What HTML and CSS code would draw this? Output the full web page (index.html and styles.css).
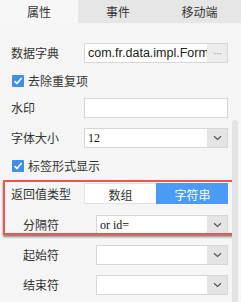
FILE: index.html
```html
<!DOCTYPE html>
<html lang="zh">
  <head>
    <meta charset="UTF-8" />
    <meta name="viewport" content="width=device-width, initial-scale=1.0" />
    <title>属性</title>
    <link rel="stylesheet" href="styles.css">
  </head>
  <body>
    <div class="tabs">
      <div class="tab active">属性</div>
      <div class="tab">事件</div>
      <div class="tab">移动端</div>
    </div>

    <div class="panel">
      <div class="row">
        <span class="label">数据字典</span>
        <div class="field">
          <span class="value wide">com.fr.data.impl.Form</span>
          <span class="btn more">···</span>
        </div>
      </div>

      <div class="check">
        <span class="box">
          <svg width="12" height="12" viewBox="0 0 12 12"><path d="M2.5 6.2 L5 8.6 L9.6 3" fill="none" stroke="#fff" stroke-width="1.6"/></svg>
        </span>
        去除重复项
      </div>

      <div class="row">
        <span class="label">水印</span>
        <div class="field"></div>
      </div>

      <div class="row">
        <span class="label">字体大小</span>
        <div class="field">
          <span class="value serif">12</span>
          <span class="btn"><svg width="9" height="6" viewBox="0 0 9 6"><path d="M1 1.2 L4.5 4.5 L8 1.2" fill="none" stroke="#555" stroke-width="1.2"/></svg></span>
        </div>
      </div>

      <div class="check">
        <span class="box">
          <svg width="12" height="12" viewBox="0 0 12 12"><path d="M2.5 6.2 L5 8.6 L9.6 3" fill="none" stroke="#fff" stroke-width="1.6"/></svg>
        </span>
        标签形式显示
      </div>

      <!-- highlighted group, the red frame is an annotation over it -->
      <div class="group">
        <div class="row tall">
          <span class="label">返回值类型</span>
          <div class="toggle">
            <span class="seg">数组</span>
            <span class="seg on">字符串</span>
          </div>
        </div>
        <div class="row sub tall">
          <span class="label">分隔符</span>
          <div class="field">
            <span class="value serif">or id=</span>
            <span class="btn"><svg width="9" height="6" viewBox="0 0 9 6"><path d="M1 1.2 L4.5 4.5 L8 1.2" fill="none" stroke="#555" stroke-width="1.2"/></svg></span>
          </div>
        </div>
        <div class="frame"></div>
      </div>

      <div class="row sub">
        <span class="label">起始符</span>
        <div class="field">
          <span class="value"></span>
          <span class="btn"><svg width="9" height="6" viewBox="0 0 9 6"><path d="M1 1.2 L4.5 4.5 L8 1.2" fill="none" stroke="#555" stroke-width="1.2"/></svg></span>
        </div>
      </div>

      <div class="row sub">
        <span class="label">结束符</span>
        <div class="field">
          <span class="value"></span>
          <span class="btn"><svg width="9" height="6" viewBox="0 0 9 6"><path d="M1 1.2 L4.5 4.5 L8 1.2" fill="none" stroke="#555" stroke-width="1.2"/></svg></span>
        </div>
      </div>

      <div class="scroll"></div>
    </div>
  </body>
</html>
```

FILE: styles.css
```css
/* Property panel */
body {
  margin: 0;
  width: 241px;
  height: 302px;
  overflow: hidden;
  background-color: #f5f5f5;
  font-family: "Noto Sans CJK SC", "Liberation Sans", sans-serif;
  font-size: 12px;
  color: #333;
}

.tabs {
  display: grid;
  grid-template-columns: 78px 80px 1fr;
  height: 23px;
  background-color: #e6e6e6;
}

.tab {
  text-align: center;
  line-height: 23px;
}

.tab.active {
  background-color: #f7f7f7;
}

.panel {
  position: relative;
  height: 279px;
  padding-top: 15px;
  box-sizing: border-box;
}

.row {
  display: flex;
  align-items: center;
  height: 30px;
  padding: 0 13px 0 11px;
}

.row.tall {
  height: 31px;
}

.row.sub {
  padding-left: 23px;
}

.label {
  width: 73px;
  flex: none;
  line-height: 16px;
}

.field {
  flex: 1;
  display: flex;
  height: 20px;
  box-sizing: border-box;
  border: 1px solid #d6d6d6;
  background-color: #fff;
  overflow: hidden;
}

.value {
  flex: 1;
  min-width: 0;
  padding-left: 3px;
  line-height: 18px;
  white-space: nowrap;
  overflow: hidden;
  font-family: "Liberation Sans", sans-serif;
  color: #222;
}

.value.wide {
  font-size: 12.5px;
}

.value.serif {
  font-family: "Liberation Serif", serif;
  color: #111;
}

.btn {
  width: 20px;
  flex: none;
  display: flex;
  align-items: center;
  justify-content: center;
  background-color: #e4e4e4;
}

.btn.more {
  color: #999;
  font-family: "Liberation Sans", sans-serif;
  font-size: 11px;
  letter-spacing: -1px;
  background-color: #ececec;
}

/* Checkboxes */
.check {
  display: flex;
  align-items: center;
  height: 25px;
  padding-left: 12px;
  line-height: 16px;
}

.box {
  width: 12px;
  height: 12px;
  margin-right: 4px;
  background-color: #3d8fe8;
  border-radius: 1px;
  display: flex;
}

/* Array / string switch */
.toggle {
  flex: 1;
  display: flex;
  height: 21px;
}

.seg {
  flex: 1;
  text-align: center;
  line-height: 21px;
  background-color: #fff;
  border: 1px solid #e2e2e2;
  border-right: none;
  box-sizing: border-box;
}

.seg.on {
  background-color: #4a9bf5;
  border-color: #4a9bf5;
  color: #fff;
}

.group {
  position: relative;
}

.frame {
  position: absolute;
  top: 2px;
  left: 3px;
  right: 6px;
  bottom: 5px;
  border: 2px solid #f0544c;
  box-shadow: 0 2px 2px rgba(0, 0, 0, 0.45);
}

.scroll {
  position: absolute;
  top: 97px;
  right: 3px;
  width: 6px;
  bottom: 0;
  border-radius: 3px 3px 0 0;
  background-color: #e3e3e3;
}
```
